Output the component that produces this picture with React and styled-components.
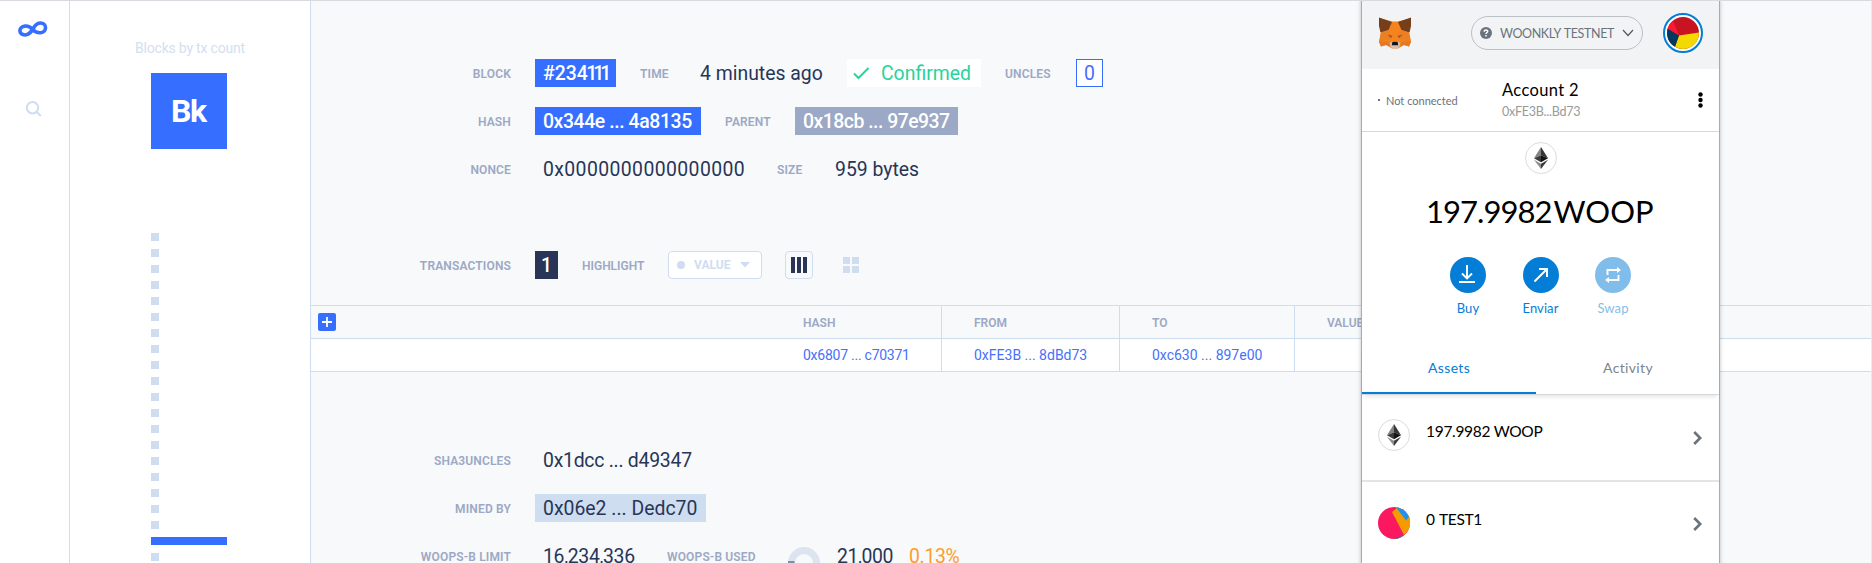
import React from 'react';
import styled, { createGlobalStyle } from 'styled-components';

const GlobalStyle = createGlobalStyle`
  * { box-sizing: border-box; }
  html, body { margin: 0; padding: 0; overflow: hidden; }
  svg { display: block; flex: none; }
`;

const Page = styled.div`
  position: relative;
  display: flex;
  width: 1872px;
  height: 563px;
  overflow: hidden;
  border-top: 1px solid #d9dae0;
  background: #fff;
  color: #283556;
  font-family: Roboto, 'Liberation Sans', sans-serif;
  white-space: nowrap;
`;

const Rail = styled.nav`
  flex: none;
  display: flex;
  flex-direction: column;
  width: 70px;
  padding: 20px 0 0 17px;
  border-right: 1px solid #cfddf0;
`;

const SearchLink = styled.a`
  padding: 63px 0 0 9px;
`;

const Blocks = styled.aside`
  flex: none;
  display: flex;
  flex-direction: column;
  width: 241px;
  padding: 37px 0 0 81px;
  border-right: 1px solid #cfddf0;
`;

const BlocksTitle = styled.div`
  width: 110px;
  height: 20px;
  margin-left: -16px;
  font-size: 14px;
  line-height: 20px;
  color: #d3e0f1;
  letter-spacing: -0.2px;
`;

const BlockTile = styled.div`
  width: 76px;
  height: 76px;
  margin: 15px 0 84px;
  padding-left: 20px;
  background: #366fff;
  color: #fff;
  font-weight: 700;
  font-size: 32px;
  line-height: 76px;
  letter-spacing: -1.4px;
`;

const Bars = styled.div`
  display: flex;
  flex-direction: column;
  gap: 8px;
`;

const Bar = styled.div`
  width: ${(p) => (p.$active ? 76 : 8)}px;
  height: 8px;
  background: ${(p) => (p.$active ? '#366fff' : '#cfddf0')};
`;

const Main = styled.main`
  flex: 1;
  min-width: 0;
  background: #f7f9fb;
  border-right: 1px solid #e6ebf2;
`;

const Fields = styled.section`
  display: flex;
  flex-direction: column;
  gap: 20px;
  padding-top: ${(p) => p.$top}px;
`;

const Row = styled.div`
  display: flex;
  align-items: center;
  height: 28px;
`;

const Lead = styled.div`
  display: flex;
  justify-content: flex-end;
  flex: none;
  width: 200px;
  margin-right: 24px;
`;

const Label = styled.span`
  flex: none;
  width: ${(p) => (p.$w ? p.$w + 'px' : 'auto')};
  height: 28px;
  margin-left: ${(p) => p.$ml || 0}px;
  font-size: 12px;
  font-weight: 600;
  line-height: 30px;
  color: #9ca8c4;
  letter-spacing: ${(p) => p.$ls ?? 0.15}px;
`;

const chip = {
  plain: ['transparent', '#283556', 400],
  blue: ['#366fff', '#fff', 500],
  slate: ['#9ba8c6', '#fff', 500],
  pale: ['#cfddf0', '#283556', 400],
  green: ['#fff', '#29d39b', 400],
  orange: ['transparent', '#ff9c2b', 400],
  dark: ['#283556', '#fff', 500],
  outline: ['#fff', '#4b6bff', 400],
};

const Value = styled.span`
  flex: none;
  display: flex;
  align-items: center;
  width: ${(p) => p.$w}px;
  height: 28px;
  padding-left: ${(p) => p.$pl ?? 8}px;
  margin-left: ${(p) => p.$ml || 0}px;
  border: ${(p) => (p.$tone === 'outline' ? '1px solid #366fff' : 'none')};
  background: ${(p) => chip[p.$tone || 'plain'][0]};
  color: ${(p) => chip[p.$tone || 'plain'][1]};
  font-weight: ${(p) => chip[p.$tone || 'plain'][2]};
  font-size: 19.4px;
  line-height: 30px;
  padding-top: 1px;
  letter-spacing: ${(p) => p.$ls || 0}px;
`;

const NarrowOnes = styled.span`
  margin-left: -1.5px;
  letter-spacing: -4px;
`;

const CheckIcon = styled.svg`
  margin-right: 11px;
`;

const Toolbar = styled.div`
  display: flex;
  align-items: center;
  height: 28px;
  margin-top: 68px;
`;

const Select = styled.div`
  display: flex;
  align-items: center;
  width: 94px;
  height: 28px;
  margin-left: 24px;
  padding-left: 8px;
  border: 1px solid #cfddf0;
  border-radius: 4px;
  background: #fff;
  color: #cfddf0;
  font-size: 12px;
  font-weight: 700;
`;

const Dot = styled.i`
  width: 8px;
  height: 8px;
  margin-right: 9px;
  border-radius: 50%;
  background: #cfddf0;
`;

const SelectText = styled.span`
  width: 46px;
`;

const ViewButton = styled.div`
  display: flex;
  align-items: center;
  justify-content: center;
  width: 28px;
  height: 28px;
  margin-left: ${(p) => (p.$active ? 23 : 24)}px;
  border: 1px solid ${(p) => (p.$active ? '#cfddf0' : 'transparent')};
  border-radius: 4px;
`;

const Table = styled.div`
  margin-top: 26px;
  border-top: 1px solid #cfddf0;
`;

const TableRow = styled.div`
  display: grid;
  grid-template-columns: 472px 159px 178px 175px 1fr;
  height: 33px;
  border-bottom: 1px solid #cfddf0;
  background: ${(p) => (p.$body ? '#fff' : 'transparent')};
`;

const Cell = styled.div`
  padding-left: ${(p) => p.$pl ?? 32}px;
  border-right: ${(p) => (p.$line ? '1px solid #cfddf0' : 'none')};
  color: ${(p) => (p.$head ? '#9ca8c4' : '#4671fb')};
  font-size: ${(p) => (p.$head ? 12 : 14)}px;
  font-weight: ${(p) => (p.$head ? 600 : 400)};
  line-height: ${(p) => (p.$head ? 35 : 33)}px;
  letter-spacing: ${(p) => p.$ls || 0}px;
`;

const AddButton = styled.div`
  display: grid;
  place-items: center;
  width: 18px;
  height: 18px;
  margin: 7px 0 0 7px;
  border-radius: 2px;
  background: #366fff;
`;

const Gauge = styled.div`
  width: 32px;
  height: 32px;
  margin-left: 31px;
  margin-top: 14px;
`;

/* Wallet popup floating above the explorer */
const Wallet = styled.div`
  position: absolute;
  top: -1px;
  left: 1361px;
  width: 359px;
  height: 570px;
  border: solid #a9abae;
  border-width: 0 1px;
  background: #fff;
  box-shadow: 0 0 4px rgba(0, 0, 0, 0.25);
  color: #000;
  font-family: Lato, 'Liberation Sans', sans-serif;
`;

const WalletHeader = styled.header`
  display: flex;
  align-items: center;
  height: 69px;
  padding: 0 16px 3px;
  background: #f2f3f4;
`;

const Network = styled.div`
  display: flex;
  align-items: center;
  width: 172px;
  height: 34px;
  margin: 0 20px 0 auto;
  padding-left: 8px;
  border: 1px solid #bbc0c5;
  border-radius: 17px;
  color: #6a737d;
  font-size: 12.5px;
`;

const NetworkName = styled.span`
  width: 130px;
  padding-left: 8px;
  letter-spacing: -0.4px;
  word-spacing: 1px;
`;

const AccountRow = styled.div`
  display: flex;
  align-items: center;
  height: 63px;
  border-bottom: 1px solid #d6d9dc;
`;

const Status = styled.div`
  display: flex;
  align-items: center;
  gap: 6px;
  width: 140px;
  padding-left: 16px;
  color: #6a737d;
  font-size: 11px;
  &::before {
    content: '';
    width: 2px;
    height: 2px;
    background: #6a737d;
  }
`;

const Account = styled.div`
  flex: 1;
`;

const AccountName = styled.div`
  font-size: 16.5px;
  line-height: 22px;
  letter-spacing: 0.35px;
`;

const Address = styled.div`
  color: #989a9b;
  font-size: 12.5px;
  line-height: 21px;
  letter-spacing: -0.25px;
`;

const Kebab = styled.svg`
  margin-right: 16px;
`;

const Overview = styled.div`
  display: flex;
  flex-direction: column;
  align-items: center;
  height: 212px;
  padding-top: 10px;
`;

const TokenRing = styled.div`
  flex: none;
  display: grid;
  place-items: center;
  width: 32px;
  height: 32px;
  border: 1px solid #dcdcdc;
  border-radius: 50%;
`;

const Balance = styled.div`
  display: flex;
  gap: 2px;
  width: 229px;
  margin-top: 17px;
  font-size: 31px;
  line-height: 40px;
`;

const Amount = styled.span`
  letter-spacing: -0.95px;
`;

const Actions = styled.div`
  display: flex;
  margin-top: 26px;
`;

const Action = styled.div`
  display: flex;
  flex-direction: column;
  align-items: center;
  width: 72.5px;
  color: #037dd6;
  font-size: 13px;
  line-height: 30px;
  letter-spacing: 0.1px;
  opacity: ${(p) => (p.$off ? 0.5 : 1)};
`;

const ActionIcon = styled.div`
  display: grid;
  place-items: center;
  width: 36px;
  height: 36px;
  border-radius: 50%;
  background: #037dd6;
`;

const Tabs = styled.div`
  display: flex;
  height: 51px;
  border-bottom: 1px solid #d6d9dc;
  box-shadow: 0 4px 4px -2px rgba(0, 0, 0, 0.1);
`;

const Tab = styled.div`
  width: ${(p) => p.$w}px;
  padding: 12px 0 0 ${(p) => (p.$active ? 66 : 67)}px;
  border-bottom: ${(p) => (p.$active ? '2px solid #037dd6' : 'none')};
  color: ${(p) => (p.$active ? '#037dd6' : '#7c848d')};
  font-size: 14px;
  line-height: 24px;
  letter-spacing: 0.35px;
`;

const Asset = styled.div`
  display: flex;
  align-items: center;
  height: ${(p) => p.$h}px;
  padding: 0 17px ${(p) => p.$pb || 0}px 16px;
  border-bottom: 2px solid #e4e4e4;
`;

const AssetName = styled.span`
  flex: 1;
  padding: 0 0 9px 16px;
  font-size: 15.5px;
  letter-spacing: ${(p) => p.$ls || 0}px;
  word-spacing: ${(p) => p.$ws || 0}px;
`;

const ChevronIcon = styled.svg`
  margin-top: ${(p) => p.$drop}px;
`;

const EthGlyph = () => (
  <svg width="14" height="22" viewBox="0 0 14 22">
    <path d="M7 0 0 11.2 7 8.3z" fill="#828384" />
    <path d="M7 0v8.3l7 2.9z" fill="#343535" />
    <path d="M0 11.2 7 8.3v7z" fill="#3c3c3b" />
    <path d="M14 11.2 7 8.3v7z" fill="#141414" />
    <path d="M0 12.8 7 22v-5.2z" fill="#8c8d8d" />
    <path d="M14 12.8 7 22v-5.2z" fill="#3c3c3b" />
  </svg>
);

const Fox = () => (
  <svg width="34" height="32" viewBox="0 0 34 32">
    <path d="M1 1 14 4.500h6L33 1l-2 14 2 10-2 4.500-5-1.500-6 3.500h-6L8 28l-5 1.500L1 25l2-10z" fill="#f5841f" />
    <path d="M1 .5 14 5 10.500 13 2.500 15.500 1 9z" fill="#763e1a" />
    <path d="M33 .5 20 5l3.500 8 8 2.500L33 9z" fill="#763e1a" />
    <path d="M10.500 13 3 15.500 1 25l10-2 3-3zM23.500 13l7.500 2.500L33 25l-10-2-3-3z" fill="#ec7f20" />
    <path d="M1 24.500h10l1.500 5L8 28l-5 1.500zM33 24.500H23l-1.500 5L26 28l5 1.500z" fill="#e27a25" />
    <path d="m9.500 17.500 5 1.200-1.500 2.500zM24.500 17.500l-5 1.200 1.500 2.500z" fill="#a8562a" />
    <path d="m11.500 26 2.500-1.500h6l2.500 1.500-1 3.500-2 2h-5l-2-2z" fill="#d5bfb2" />
    <path d="m14.200 25.500.8-.7h4l.8.7.4 2.700h-6.400z" fill="#161616" />
  </svg>
);

const Chevron = ({ drop }) => (
  <ChevronIcon $drop={drop} width="9" height="14" viewBox="0 0 9 14">
    <path d="m1.200 1 6 6-6 6" fill="none" stroke="#6a737d" strokeWidth="2.600" />
  </ChevronIcon>
);

export default function App() {
  return (
    <>
      <GlobalStyle />
      <Page>
        <Rail>
          <svg width="31" height="17" viewBox="0 0 31 17">
            <path
              d="M15.700 8.500C13 5.400 10.500 4.900 8 5.100 1.200 5.700 1.200 14 8 14c4.500 0 6.500-3.500 8.700-7.300C18.400 3.700 20.700 2 23.500 2c6.700 0 6.700 9.200 0 9.700-3.500.2-5.600-.7-7.800-3.200z"
              fill="none"
              stroke="#366fff"
              strokeWidth="3.600"
            />
          </svg>
          <SearchLink>
            <svg width="16" height="16" viewBox="0 0 16 16" fill="none" stroke="#cfddf0" strokeWidth="2">
              <circle cx="6.500" cy="6.700" r="5.700" />
              <path d="m10.500 10.700 4.300 4.300" />
            </svg>
          </SearchLink>
        </Rail>

        <Blocks>
          <BlocksTitle>Blocks by tx count</BlocksTitle>
          <BlockTile>Bk</BlockTile>
          <Bars>
            {Array.from({ length: 21 }, (_, i) => (
              <Bar key={i} $active={i === 19} />
            ))}
          </Bars>
        </Blocks>

        <Main>
          <Fields $top={58}>
            <Row>
              <Lead><Label>BLOCK</Label></Lead>
              <Value $tone="blue" $w={81}>#234<NarrowOnes>111</NarrowOnes></Value>
              <Label $ml={24} $w={60}>TIME</Label>
              <Value $w={147} $pl={0}>4 minutes ago</Value>
              <Value $tone="green" $w={134} $pl={6}>
                <CheckIcon width="17" height="14" viewBox="0 0 17 14">
                  <path d="m1 6.500 4.500 4.500L15.500 1" fill="none" stroke="#29d39b" strokeWidth="2" />
                </CheckIcon>
                Confirmed
              </Value>
              <Label $ml={24} $w={71}>UNCLES</Label>
              <Value $tone="outline" $w={27} $pl={7}>0</Value>
            </Row>
            <Row>
              <Lead><Label>HASH</Label></Lead>
              <Value $tone="blue" $w={166} $ls={-0.4}>0x344e ... 4a8135</Value>
              <Label $ml={24} $w={70}>PARENT</Label>
              <Value $tone="slate" $w={163} $ls={-0.5}>0x18cb ... 97e937</Value>
            </Row>
            <Row>
              <Lead><Label>NONCE</Label></Lead>
              <Value $w={218} $ls={0.4}>0x0000000000000000</Value>
              <Label $ml={24} $w={50}>SIZE</Label>
              <Value $w={90}>959 bytes</Value>
            </Row>
          </Fields>

          <Toolbar>
            <Lead><Label>TRANSACTIONS</Label></Lead>
            <Value $tone="dark" $w={23} $pl={6}>1</Value>
            <Label $ml={24} $w={62} $ls={0}>HIGHLIGHT</Label>
            <Select>
              <Dot />
              <SelectText>VALUE</SelectText>
              <svg width="10" height="6" viewBox="0 0 10 6"><path d="M0 0h10L5 5.500z" fill="#cfddf0" /></svg>
            </Select>
            <ViewButton $active>
              <svg width="16" height="16" viewBox="0 0 16 16" fill="#283556">
                <path d="M0 0h4v16H0zM6 0h4v16H6zM12 0h4v16h-4z" />
              </svg>
            </ViewButton>
            <ViewButton>
              <svg width="16" height="16" viewBox="0 0 16 16" fill="#cfddf0">
                <path d="M0 0h7v7H0zM9 0h7v7H9zM0 9h7v7H0zM9 9h7v7H9z" />
              </svg>
            </ViewButton>
          </Toolbar>

          <Table>
            <TableRow>
              <Cell $pl={0}>
                <AddButton>
                  <svg width="10" height="10" viewBox="0 0 10 10"><path d="M5 0v10M0 5h10" stroke="#fff" strokeWidth="1.800" /></svg>
                </AddButton>
              </Cell>
              <Cell $head $line $pl={20}>HASH</Cell>
              <Cell $head $line>FROM</Cell>
              <Cell $head $line>TO</Cell>
              <Cell $head>VALUE</Cell>
            </TableRow>
            <TableRow $body>
              <Cell />
              <Cell $line $pl={20} $ls={-0.25}>0x6807 ... c70371</Cell>
              <Cell $line>0xFE3B ... 8dBd73</Cell>
              <Cell $line>0xc630 ... 897e00</Cell>
              <Cell />
            </TableRow>
          </Table>

          <Fields $top={74}>
            <Row>
              <Lead><Label>SHA3UNCLES</Label></Lead>
              <Value $w={171} $ls={-0.25}>0x1dcc ... d49347</Value>
            </Row>
            <Row>
              <Lead><Label>MINED BY</Label></Lead>
              <Value $tone="pale" $w={171}>0x06e2 ... Dedc70</Value>
            </Row>
            <Row>
              <Lead><Label>WOOPS-B LIMIT</Label></Lead>
              <Value $w={108} $ls={-0.3}>16,234,336</Value>
              <Label $ml={24} $w={90}>WOOPS-B USED</Label>
              <Gauge>
                <svg width="32" height="32" viewBox="0 0 32 32">
                  <circle cx="16" cy="16" r="12.500" fill="none" stroke="#dce5ef" strokeWidth="7" />
                  <path d="M0 15h6.500" stroke="#283556" />
                </svg>
              </Gauge>
              <Value $w={73} $ml={16} $pl={1} $ls={-0.4}>21,000</Value>
              <Value $tone="orange" $w={60} $pl={0} $ls={-0.3}>0.13%</Value>
            </Row>
          </Fields>
        </Main>

        <Wallet>
          <WalletHeader>
            <Fox />
            <Network>
              <svg width="12" height="12" viewBox="0 0 12 12">
                <circle cx="6" cy="6" r="6" fill="#6a737d" />
                <path d="M4.200 4.700C4.200 2.300 7.800 2.500 7.700 4.500 7.700 5.500 6 5.600 6 7.100M6 8v1.400" fill="none" stroke="#fff" strokeWidth="1.500" />
              </svg>
              <NetworkName>WOONKLY TESTNET</NetworkName>
              <svg width="12" height="8" viewBox="0 0 12 8"><path d="m1 1 5 5.500L11 1" fill="none" stroke="#535a61" strokeWidth="1.200" /></svg>
            </Network>
            <svg width="40" height="40" viewBox="0 0 40 40">
              <circle cx="20" cy="20" r="19" fill="#fff" stroke="#037dd6" strokeWidth="2" />
              <circle cx="20" cy="20" r="16" fill="#c81422" />
              <path d="M16 22.500 36 19.500A16 16 0 0 1 12 33.800z" fill="#f3d900" />
              <path d="M16 22.500 12 33.800A16 16 0 0 1 4.600 15.500z" fill="#03395f" />
              <path d="M16 22.500 4.600 15.500A16 16 0 0 1 10 7.600z" fill="#fb1834" />
            </svg>
          </WalletHeader>

          <AccountRow>
            <Status>Not connected</Status>
            <Account>
              <AccountName>Account 2</AccountName>
              <Address>0xFE3B...Bd73</Address>
            </Account>
            <Kebab width="5" height="16" viewBox="0 0 5 16">
              <circle cx="2.500" cy="2.500" r="2.200" />
              <circle cx="2.500" cy="8" r="2.200" />
              <circle cx="2.500" cy="13.500" r="2.200" />
            </Kebab>
          </AccountRow>

          <Overview>
            <TokenRing><EthGlyph /></TokenRing>
            <Balance>
              <Amount>197.9982</Amount>
              <span>WOOP</span>
            </Balance>
            <Actions>
              <Action>
                <ActionIcon>
                  <svg width="18" height="20" viewBox="0 0 18 20" fill="none" stroke="#fff" strokeWidth="1.900">
                    <path d="M8 0v13M3 8.500l5 5 5-5M0 17h16" />
                  </svg>
                </ActionIcon>
                Buy
              </Action>
              <Action>
                <ActionIcon>
                  <svg width="16" height="16" viewBox="0 0 16 16" fill="none" stroke="#fff" strokeWidth="1.900">
                    <path d="M1.500 14.500 14 2M6 2h8v8" />
                  </svg>
                </ActionIcon>
                Enviar
              </Action>
              <Action $off>
                <ActionIcon>
                  <svg width="18" height="18" viewBox="0 0 18 18" fill="none" stroke="#fff" strokeWidth="1.900">
                    <path d="M3.500 9V4H14M14.500 9v5H4" />
                    <path d="m13 1 4 3-4 3zM5 11l-4 3 4 3z" fill="#fff" stroke="none" />
                  </svg>
                </ActionIcon>
                Swap
              </Action>
            </Actions>
          </Overview>

          <Tabs>
            <Tab $active $w={174}>Assets</Tab>
            <Tab $w={183}>Activity</Tab>
          </Tabs>

          <Asset $h={87} $pb={5}>
            <TokenRing><EthGlyph /></TokenRing>
            <AssetName $ls={-0.3}>197.9982 WOOP</AssetName>
            <Chevron drop={6} />
          </Asset>
          <Asset $h={84}>
            <svg width="32" height="32" viewBox="0 0 32 32">
              <circle cx="16" cy="16" r="16" fill="#fb1860" />
              <path d="m14 5 6-5 11 9a16 16 0 0 1-5 19z" fill="#f59a00" />
              <path d="M18 .2A16 16 0 0 1 31 10l-3 3.500z" fill="#1f93f2" />
              <path d="m26 28-10 4a16 16 0 0 0 10-4z" fill="#0d8f8a" />
            </svg>
            <AssetName $ls={-0.3} $ws={1}>0 TEST1</AssetName>
            <Chevron drop={2} />
          </Asset>
        </Wallet>
      </Page>
    </>
  );
}
